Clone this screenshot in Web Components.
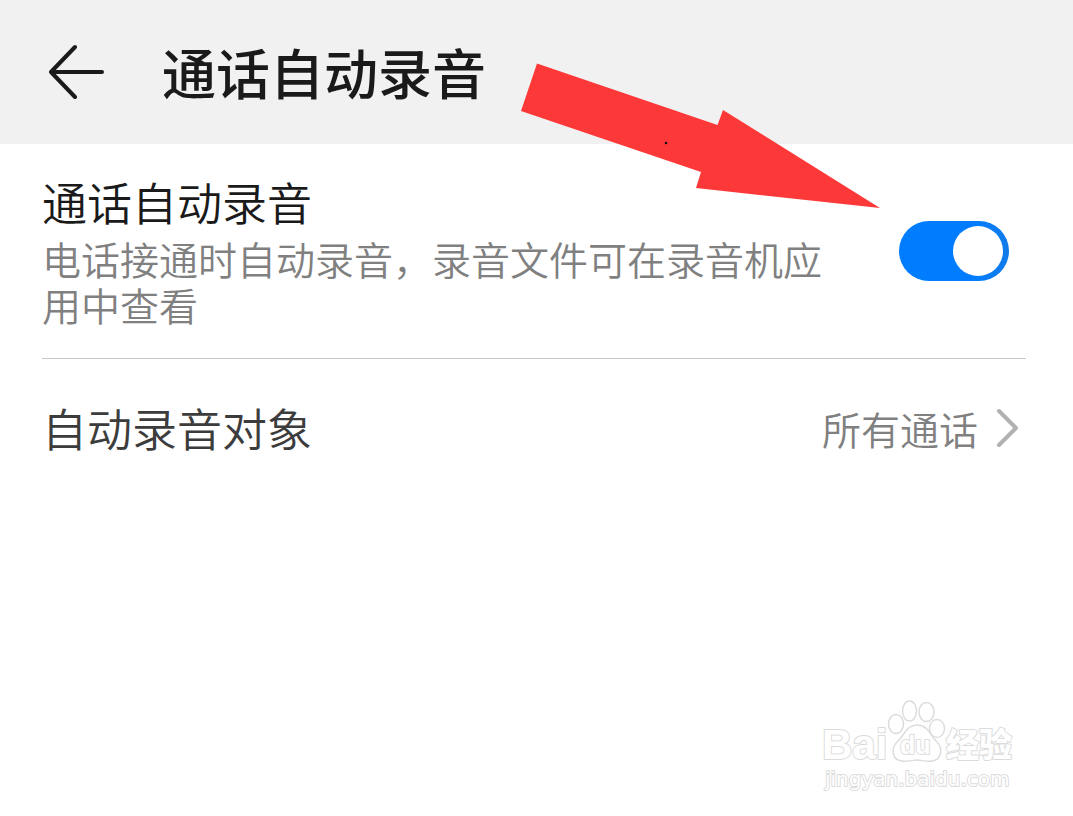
<!DOCTYPE html>
<html lang="zh-CN">
<head>
<meta charset="utf-8">
<meta name="viewport" content="width=device-width, initial-scale=1">
<title>通话自动录音</title>
<style>
  body { margin: 0; background: #fff; font-family: "Noto Sans CJK SC", "Noto Sans", sans-serif; }
</style>
</head>
<body>
<call-recording-page></call-recording-page>

<template id="t-page">
  <style>
    :host { display: block; position: relative; min-height: 100vh; color: #1a1a1a; }
    main { padding: 0 47px 0 42px; }
    annotation-arrow { position: absolute; left: 520px; top: 62px; }
    site-watermark { position: absolute; right: 56px; bottom: 20px; }
  </style>
  <app-header>通话自动录音</app-header>
  <main>
    <switch-row>
      通话自动录音
      <span slot="detail">电话接通时自动录音，录音文件可在录音机应用中查看</span>
    </switch-row>
    <link-row>
      自动录音对象
      <span slot="value">所有通话</span>
    </link-row>
  </main>
  <annotation-arrow></annotation-arrow>
  <site-watermark></site-watermark>
</template>

<template id="t-header">
  <style>
    :host { display: flex; align-items: center; gap: 57px; height: 144px; padding: 0 49px; background: #f1f1f1; }
    button { display: block; padding: 0; border: 0; background: none; color: inherit; }
    svg { display: block; }
    h1 { margin: 0; font-size: 54px; line-height: 80px; font-weight: 500; white-space: nowrap; }
  </style>
  <button type="button" aria-label="返回">
    <svg width="56" height="56" viewBox="0 0 56 56" fill="none" stroke="currentColor" stroke-width="4" stroke-linecap="round" stroke-linejoin="round"><path d="M26 3 2 28 26 53M2 28H53"/></svg>
  </button>
  <h1><slot></slot></h1>
</template>

<template id="t-switch">
  <style>
    :host { display: block; border-bottom: 1px solid #c8c8c8; }
    label { display: flex; align-items: center; justify-content: space-between; gap: 60px; padding-right: 17px; }
    .text { flex: 1; max-width: 798px; padding: 30px 0 31px; }
    .title { display: block; font-size: 45px; line-height: 56px; font-weight: 350; }
    .detail { display: block; margin-top: 5px; font-size: 39px; line-height: 46px; font-weight: 350; color: #808080; }
    input { appearance: none; flex: none; display: flex; align-items: center; box-sizing: border-box; width: 110px; height: 60px; margin: 0; padding: 0 6px; border-radius: 30px; background: #b3b3b3; }
    input::before { content: ""; width: 50px; height: 50px; border-radius: 50%; background: #fff; }
    input:checked { justify-content: flex-end; background: linear-gradient(90deg, #007dff 70%, #147be8); }
  </style>
  <label>
    <span class="text">
      <span class="title"><slot></slot></span>
      <span class="detail"><slot name="detail"></slot></span>
    </span>
    <input type="checkbox" role="switch" checked>
  </label>
</template>

<template id="t-link">
  <style>
    :host { display: block; }
    a { display: flex; align-items: center; justify-content: space-between; min-height: 138px; padding-right: 6px; color: #3c3c3c; text-decoration: none; font-weight: 350; }
    .title { font-size: 45px; line-height: 56px; }
    .value { display: flex; align-items: center; gap: 18px; font-size: 39px; line-height: 46px; color: #808080; }
    svg { display: block; }
  </style>
  <a href="#targets">
    <span class="title"><slot></slot></span>
    <span class="value"><slot name="value"></slot>
      <svg width="24" height="40" viewBox="0 0 24 40" fill="none" stroke="#b2b2b2" stroke-width="4" stroke-linecap="round" stroke-linejoin="round"><path d="M3 3 20 20 3 37"/></svg>
    </span>
  </a>
</template>

<template id="t-arrow">
  <style>
    :host { display: block; pointer-events: none; }
    svg { display: block; }
  </style>
  <svg width="362" height="148" viewBox="0 0 362 148" aria-hidden="true">
    <path d="M17 1.500 197.500 63 203 48 360 146 176 126 181 110 1 49Z" fill="#fd3838"/>
    <circle cx="146" cy="81" r="1.300" fill="#111"/>
  </svg>
</template>

<template id="t-watermark">
  <style>
    :host { display: block; pointer-events: none; }
    svg { display: block; overflow: visible; }
    text { paint-order: stroke; }
    .brand { font-family: "Liberation Sans", sans-serif; font-weight: 700; }
    .cjk { font-family: "Noto Sans CJK SC", sans-serif; font-weight: 900; }
    .site { font-family: "DejaVu Sans", sans-serif; }
  </style>
  <svg width="194" height="96" viewBox="0 0 194 96" fill="#fff" stroke="#dcdcdc" stroke-width="2" stroke-linejoin="round">
    <g stroke-width="1.500">
      <ellipse cx="73" cy="24" rx="7.500" ry="9.500"/>
      <ellipse cx="86.500" cy="11" rx="7" ry="10"/>
      <ellipse cx="103.500" cy="12" rx="7.500" ry="9.500"/>
      <ellipse cx="114" cy="28.500" rx="7.500" ry="9"/>
      <path d="M94 25C84 25 82 34 75 41 68 47 68 60 79 61 85 62 89 60 94 60S103 62 109 61C119 60 120 48 114 42 107 35 105 25 94 25Z"/>
    </g>
    <text class="brand" x="-1" y="59" font-size="42">Bai</text>
    <text class="brand" x="77" y="54" font-size="25">du</text>
    <text class="cjk" x="123" y="57" font-size="33">经验</text>
    <text class="site" x="2" y="86" font-size="20">jingyan.baidu.com</text>
  </svg>
</template>

<script>
  const define = (name, templateId) => customElements.define(name, class extends HTMLElement {
    constructor() {
      super();
      this.attachShadow({ mode: "open" })
        .append(document.getElementById(templateId).content.cloneNode(true));
    }
  });
  define("app-header", "t-header");
  define("switch-row", "t-switch");
  define("link-row", "t-link");
  define("annotation-arrow", "t-arrow");
  define("site-watermark", "t-watermark");
  define("call-recording-page", "t-page");
</script>
</body>
</html>
